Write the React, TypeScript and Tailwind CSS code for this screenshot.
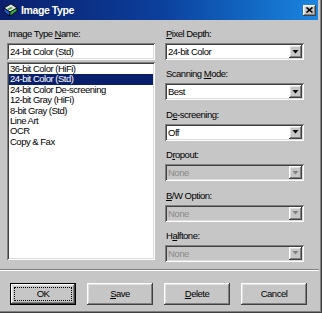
import React from "react";

const FONT = { fontFamily: '"Liberation Sans", Arial, sans-serif' };

const sunken =
  "shadow-[inset_1px_1px_#808080,inset_-1px_-1px_#ffffff,inset_2px_2px_#404040,inset_-2px_-2px_#dcdcdc]";
const raised =
  "shadow-[inset_-1px_-1px_#404040,inset_1px_1px_#ffffff,inset_-2px_-2px_#808080,inset_2px_2px_#e0e0e0]";

const TXT = "text-[9.5px] tracking-[-0.5px]";

function Label({ text, u }: { text: string; u: number }) {
  return (
    <div className={`h-[11px] leading-[11px] ${TXT} text-black whitespace-nowrap`}>
      {text.slice(0, u)}
      <span className="underline decoration-1 underline-offset-[1px]">{text[u]}</span>
      {text.slice(u + 1)}
    </div>
  );
}

function Arrow({ disabled }: { disabled?: boolean }) {
  return (
    <div className={`w-[13px] h-[13px] bg-[#c6c6c6] flex items-center justify-center ${raised}`}>
      <svg width="7" height="4" viewBox="0 0 7 4">
        <polygon points="0.5,0 6.5,0 3.5,3.5" fill={disabled ? "#808080" : "#000"} />
      </svg>
    </div>
  );
}

function Select({ value, disabled }: { value: string; disabled?: boolean }) {
  return (
    <div
      className={`h-[17px] w-[139px] p-[2px] flex items-center ${sunken} ${
        disabled ? "bg-[#c6c6c6]" : "bg-white"
      }`}
    >
      <div
        className={`flex-1 pl-[1px] ${TXT} leading-[13px] ${
          disabled ? "text-[#8a8a8a]" : "text-black"
        }`}
      >
        {value}
      </div>
      <Arrow disabled={disabled} />
    </div>
  );
}

function Group({ label, u, value, disabled }: { label: string; u: number; value: string; disabled?: boolean }) {
  return (
    <div className="flex flex-col gap-[4px]">
      <div className="pl-[1px]">
        <Label text={label} u={u} />
      </div>
      <Select value={value} disabled={disabled} />
    </div>
  );
}

function Button({ text, u, def }: { text: string; u?: number; def?: boolean }) {
  const content =
    u === undefined ? (
      text
    ) : (
      <>
        {text.slice(0, u)}
        <span className="underline decoration-1 underline-offset-[1px]">{text[u]}</span>
        {text.slice(u + 1)}
      </>
    );
  if (def) {
    return (
      <div className="w-[66px] h-[22px] border border-black">
        <div className={`w-full h-full bg-[#c6c6c6] p-[3px] ${raised}`}>
          <div className={`w-full h-full border border-dotted border-black flex items-center justify-center ${TXT} text-black`}>
            {content}
          </div>
        </div>
      </div>
    );
  }
  return (
    <div
      className={`w-[66px] h-[22px] bg-[#c6c6c6] flex items-center justify-center ${TXT} text-black ${raised}`}
    >
      {content}
    </div>
  );
}

const items = [
  "36-bit Color (HiFi)",
  "24-bit Color (Std)",
  "24-bit Color De-screening",
  "12-bit Gray (HiFi)",
  "8-bit Gray (Std)",
  "Line Art",
  "OCR",
  "Copy & Fax",
];

export default function App() {
  return (
    <div
      style={FONT}
      className="w-[322px] h-[313px] bg-[#c6c6c6] flex flex-col overflow-hidden shadow-[inset_-1px_-1px_#404040,inset_-2px_-2px_#808080]"
    >
      {/* Title bar */}
      <div className="h-[20px] w-[318px] bg-gradient-to-r from-[#0a1f6c] via-[#0c3f9c] to-[#1c86e0] flex items-center pl-[3px] pr-[2px] shrink-0">
        <svg width="15" height="15" viewBox="0 0 15 15" className="shrink-0">
          <polygon points="1,5 8,1 14,5 7,9" fill="#e8e8e8" stroke="#000" strokeWidth="0.8" />
          <polygon points="1,5 7,9 7,13 1,9" fill="#1a5fd0" stroke="#000" strokeWidth="0.8" />
          <polygon points="7,9 14,5 14,8 7,13" fill="#2fb54a" stroke="#000" strokeWidth="0.8" />
          <polygon points="4,6 8,4 10,5 6,7" fill="#3a9a3a" />
        </svg>
        <div className="ml-[3px] text-white font-bold text-[10.5px] tracking-[-0.4px] leading-[20px] flex-1">
          Image Type
        </div>
        <div className={`w-[13px] h-[11px] bg-[#c6c6c6] flex items-center justify-center ${raised}`}>
          <svg width="7" height="6" viewBox="0 0 7 6">
            <path d="M0.5 0.5 L6.5 5.5 M6.5 0.5 L0.5 5.5" stroke="#000" strokeWidth="1.6" />
          </svg>
        </div>
      </div>

      {/* Body */}
      <div className="h-[249px] shrink-0 flex pl-[7px] pt-[8px] gap-[10px]">
        {/* Left column */}
        <div className="w-[148px] flex flex-col">
          <div className="pl-[1px]">
            <Label text="Image Type Name:" u={11} />
          </div>
          <div className={`mt-[4px] h-[17px] bg-white p-[2px] ${sunken}`}>
            <div className={`pl-[1px] ${TXT} leading-[13px] text-black`}>24-bit Color (Std)</div>
          </div>
          <div className={`mt-[2px] h-[198px] bg-white p-[2px] ${sunken}`}>
            {items.map((it, i) => (
              <div
                key={it}
                className={`h-[10.4px] leading-[10.4px] pl-[1px] ${TXT} whitespace-nowrap ${
                  i === 1 ? "bg-[#0a1f6c] text-white" : "text-black"
                }`}
              >
                {it}
              </div>
            ))}
          </div>
        </div>

        {/* Right column */}
        <div className="w-[139px] flex flex-col gap-[8.4px]">
          <Group label="Pixel Depth:" u={0} value="24-bit Color" />
          <Group label="Scanning Mode:" u={9} value="Best" />
          <Group label="De-screening:" u={1} value="Off" />
          <Group label="Dropout:" u={1} value="None" disabled />
          <Group label="B/W Option:" u={0} value="None" disabled />
          <Group label="Halftone:" u={1} value="None" disabled />
        </div>
      </div>

      {/* Separator */}
      <div className="w-[319px] h-[2px] shrink-0 border-t border-t-[#808080] border-b border-b-white" />

      {/* Buttons */}
      <div className="mt-[12px] pl-[10px] flex gap-[11px]">
        <Button text="OK" def />
        <Button text="Save" u={0} />
        <Button text="Delete" u={0} />
        <Button text="Cancel" />
      </div>
    </div>
  );
}
